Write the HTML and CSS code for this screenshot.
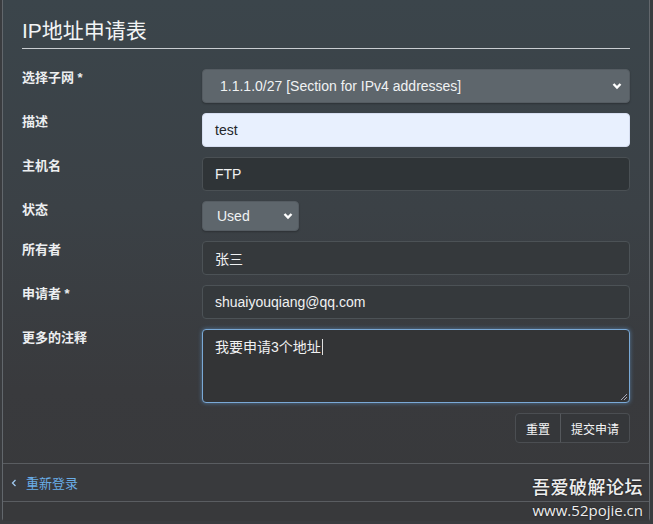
FILE: index.html
```html
<!DOCTYPE html>
<html lang="zh-CN">
<head>
<meta charset="utf-8">
<title>IP地址申请表</title>
<link rel="stylesheet" href="styles.css">
</head>
<body>
<div class="panel">
  <div class="body">
    <h1 class="title">IP地址申请表</h1>
    <form class="form">
      <div class="row">
        <label class="label">选择子网 *</label>
        <div class="field">
          <div class="select wide">
            <span>1.1.1.0/27 [Section for IPv4 addresses]</span>
            <svg class="chev" width="10" height="8" viewBox="0 0 10 8"><path d="M1.5 2 L5 5.5 L8.5 2" fill="none" stroke="#fff" stroke-width="2.4"/></svg>
          </div>
        </div>
      </div>
      <div class="row">
        <label class="label">描述</label>
        <div class="field"><div class="input autofill">test</div></div>
      </div>
      <div class="row">
        <label class="label">主机名</label>
        <div class="field"><div class="input dark">FTP</div></div>
      </div>
      <div class="row">
        <label class="label">状态</label>
        <div class="field">
          <div class="select small">
            <span>Used</span>
            <svg class="chev" width="10" height="8" viewBox="0 0 10 8"><path d="M1.5 2 L5 5.5 L8.5 2" fill="none" stroke="#fff" stroke-width="2.4"/></svg>
          </div>
        </div>
      </div>
      <div class="row">
        <label class="label">所有者</label>
        <div class="field"><div class="input">张三</div></div>
      </div>
      <div class="row">
        <label class="label">申请者 *</label>
        <div class="field"><div class="input">shuaiyouqiang@qq.com</div></div>
      </div>
      <div class="row">
        <label class="label">更多的注释</label>
        <div class="field">
          <div class="textarea"><span>我要申请3个地址</span><span class="caret"></span>
            <svg class="grip" width="8" height="8" viewBox="0 0 8 8"><path d="M7 1 L1 7 M7 4 L4 7" stroke="#aab" stroke-width="1"/></svg>
          </div>
        </div>
      </div>
      <div class="actions">
        <div class="btn-group">
          <button type="button" class="btn">重置</button>
          <button type="button" class="btn">提交申请</button>
        </div>
      </div>
    </form>
  </div>
  <div class="footer">
    <a class="back" href="#"><svg width="6" height="8" viewBox="0 0 6 8"><path d="M4.5 1 L1.5 4 L4.5 7" fill="none" stroke="#9fc8ee" stroke-width="1.3"/></svg><span>重新登录</span></a>
  </div>
  <div class="foot2"></div>
  <div class="watermark">
    <div class="wm1">吾爱破解论坛</div>
    <div class="wm2">www.52pojie.cn</div>
  </div>
</div>
</body>
</html>
```
FILE: styles.css
```css
html, body {
  margin: 0;
  padding: 0;
}
body {
  width: 653px;
  height: 524px;
  background: #3a3c3f;
  font-family: "Liberation Sans", "Noto Sans CJK SC", sans-serif;
  color: #e6e8ea;
  overflow: hidden;
}
.panel {
  position: relative;
  margin: 0 3px 0 2px;
  height: 521px;
  border-left: 1px solid #62676c;
  border-right: 1px solid #62676c;
  border-bottom: 1px solid #62676c;
  border-radius: 0 0 3px 3px;
  background: linear-gradient(to bottom, #3b454b 0%, #3b4146 40%, #393a3d 75%, #38393b 100%);
  box-sizing: border-box;
}
.body {
  padding: 0 19px 0 19px;
  height: 463px;
  box-sizing: border-box;
}
.title {
  margin: 0;
  padding: 19px 0 5px 0;
  font-size: 21px;
  font-weight: normal;
  line-height: 24px;
  color: #f2f4f5;
  border-bottom: 1px solid #c9cdd1;
}
.form {
  padding-top: 20px;
}
.row {
  display: grid;
  grid-template-columns: 180px 1fr;
  margin-bottom: 10px;
}
.label {
  font-size: 13px;
  font-weight: bold;
  line-height: 18px;
  padding-top: 0;
  color: #eceef0;
}
.field {
  display: flex;
}
.select {
  display: flex;
  align-items: center;
  justify-content: space-between;
  box-sizing: border-box;
  background: #5e666c;
  border: 1px solid #555c62;
  border-radius: 4px;
  color: #f0f2f3;
  font-size: 14px;
  box-shadow: 0 1px 2px rgba(0,0,0,0.25);
}
.select.wide {
  width: 100%;
  height: 34px;
  padding: 0 7px 0 17px;
}
.select.small {
  width: 97px;
  height: 30px;
  padding: 0 5px 0 14px;
}
.chev {
  display: block;
}
.input {
  box-sizing: border-box;
  width: 100%;
  height: 34px;
  padding: 0 12px;
  display: flex;
  align-items: center;
  font-size: 14px;
  border-radius: 4px;
  background: #35393c;
  border: 1px solid #4c5256;
  color: #f0f1f2;
}
.input.autofill {
  background: #e8f0fe;
  border-color: #d6def0;
  color: #23272b;
}
.input.dark {
  background: #2f3437;
  border-color: #4a5054;
}
.textarea {
  position: relative;
  box-sizing: border-box;
  width: 100%;
  height: 74px;
  padding: 8px 12px;
  font-size: 14px;
  line-height: 18px;
  border-radius: 4px;
  background: #333436;
  border: 1px solid #7aa9d6;
  box-shadow: 0 0 4px rgba(102,160,220,0.6);
  color: #f0f1f2;
}
.caret {
  display: inline-block;
  width: 1px;
  height: 16px;
  background: #e0e0e0;
  vertical-align: -3px;
  margin-left: 1px;
}
.grip {
  position: absolute;
  right: 1px;
  bottom: 1px;
}
.actions {
  display: flex;
  justify-content: flex-end;
}
.btn-group {
  display: flex;
}
.btn {
  font-family: "Liberation Sans", "Noto Sans CJK SC", sans-serif;
  font-size: 12px;
  color: #f4f5f6;
  background: #35373a;
  border: 1px solid #4b4e52;
  height: 30px;
  padding: 0 10px;
  margin: 0;
  cursor: pointer;
}
.btn:first-child {
  border-radius: 4px 0 0 4px;
}
.btn + .btn {
  border-left: 1px solid #55585c;
  margin-left: -1px;
  border-radius: 0 4px 4px 0;
}
.footer {
  border-top: 1px solid #5a5d61;
  height: 38px;
  box-sizing: border-box;
  display: flex;
  align-items: center;
  padding-left: 8px;
  background: #393a3d;
}
.back {
  display: flex;
  align-items: center;
  gap: 9px;
  text-decoration: none;
  color: #6aaee8;
  font-size: 13px;
}
.foot2 {
  border-top: 1px solid #5a5d61;
  height: 19px;
  background: #38393b;
}
.watermark {
  position: absolute;
  right: 6px;
  top: 476px;
  text-align: right;
  color: #eeeeee;
  text-shadow: 0 0 2px rgba(0,0,0,0.6);
}
.wm1 {
  font-size: 18px;
  line-height: 24px;
  letter-spacing: 0.5px;
  font-weight: 500;
}
.wm2 {
  font-family: "Open Sans", "Liberation Sans", sans-serif;
  font-size: 15px;
  line-height: 20px;
}
```
